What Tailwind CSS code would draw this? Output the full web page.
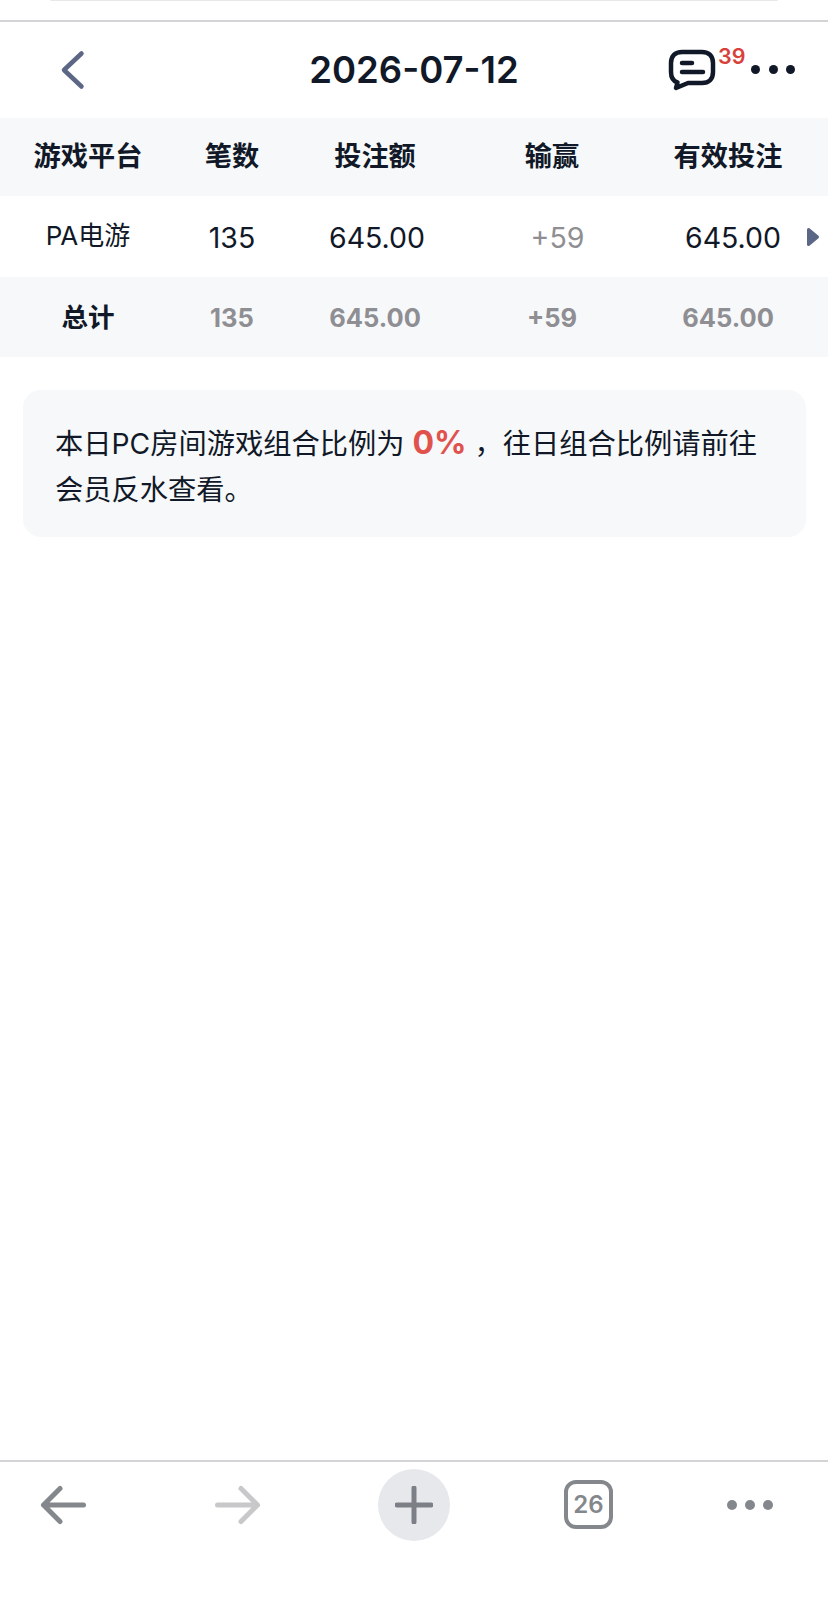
<!DOCTYPE html>
<html lang="zh-CN">
  <head>
    <meta charset="UTF-8" />
    <meta name="viewport" content="width=device-width, initial-scale=1.0" />
    <title>2026-07-12</title>
    <script src="https://cdn.jsdelivr.net/npm/@tailwindcss/browser@4"></script>
  </head>
  <body class="bg-white text-[#111827] font-['Inter','Noto_Sans_CJK_SC',sans-serif]">
    <div class="w-[828px] h-[1615px] flex flex-col overflow-hidden">
      <!-- browser top edge -->
      <div class="h-[22px] shrink-0 border-b-2 border-[#d4d4d6]">
        <div class="mx-[50px] h-px bg-[#e8e8ea] rounded-b-full"></div>
      </div>

      <!-- page header -->
      <header class="relative h-[96px] shrink-0 flex items-center justify-center">
        <svg class="absolute left-[60px] top-[28px]" width="26" height="40" viewBox="0 0 26 40" fill="none">
          <path d="M21.500 3.500 L4 20 L21.500 36.500" stroke="#5c6685" stroke-width="4.500" stroke-linecap="round" stroke-linejoin="round" />
        </svg>
        <h1 class="text-[36.500px] font-semibold leading-none pt-[1px]">2026-07-12</h1>
        <div class="absolute left-[668px] top-[27px] flex items-start">
          <svg width="48" height="42" viewBox="0 0 48 42" fill="none">
            <path d="M14 3 H34 C41 3 45 7 45 14 V23 C45 30 41 34 34 34 H20 L8 39 L9.500 33.500 C5 32 3 29 3 23 V14 C3 7 7 3 14 3 Z" stroke="#111827" stroke-width="4.500" stroke-linejoin="round" />
            <path d="M14 14 H24 M14 23 H35" stroke="#111827" stroke-width="4.500" stroke-linecap="round" />
          </svg>
        </div>
        <span class="absolute left-[718px] top-[21px] text-[21.500px] font-semibold leading-[26px] text-[#d8403a]">39</span>
        <div class="absolute left-[751px] top-[43px] flex gap-[8.500px]">
          <span class="size-[9px] rounded-full bg-[#111827]"></span>
          <span class="size-[9px] rounded-full bg-[#111827]"></span>
          <span class="size-[9px] rounded-full bg-[#111827]"></span>
        </div>
      </header>

      <!-- table -->
      <section class="shrink-0 text-center">
        <div class="grid grid-cols-[176px_112px_174px_180px_172px] items-center h-[78px] bg-[#f7f8fa] text-[27.200px] font-bold">
          <div>游戏平台</div>
          <div>笔数</div>
          <div>投注额</div>
          <div>输赢</div>
          <div>有效投注</div>
        </div>
        <div class="relative grid grid-cols-[176px_112px_178px_183px_168px] items-center h-[81px] pt-[3px] text-[28.500px]">
          <div class="text-[26px] mt-[-6px]">PA电游</div>
          <div>135</div>
          <div>645.00</div>
          <div class="text-[#8e8e93]">+59</div>
          <div>645.00</div>
          <svg class="absolute left-[806px] top-[31px]" width="14" height="20" viewBox="0 0 14 20">
            <path d="M2.500 2.500 L11.500 10 L2.500 17.500 Z" fill="#5c6685" stroke="#5c6685" stroke-width="3" stroke-linejoin="round" />
          </svg>
        </div>
        <div class="grid grid-cols-[176px_112px_174px_180px_172px] items-center h-[80px] pt-[2px] bg-[#f7f8fa] text-[25.500px] font-bold">
          <div class="text-[26.500px]">总计</div>
          <div class="text-[#8e8e93]">135</div>
          <div class="text-[#8e8e93]">645.00</div>
          <div class="text-[#8e8e93]">+59</div>
          <div class="text-[#8e8e93]">645.00</div>
        </div>
      </section>

      <!-- notice card -->
      <section class="ml-[23px] mr-[22px] mt-[33px] h-[147px] shrink-0 rounded-[18px] bg-[#f7f8fa] pl-[32px] pt-[31px] text-[28.250px] leading-[46px]">
        <p>本日PC房间游戏组合比例为 <span class="text-[32px] leading-none font-bold text-[#e0524c]">0%</span> ，往日组合比例请前往<br />会员反水查看。</p>
      </section>

      <div class="flex-1"></div>

      <!-- browser toolbar -->
      <nav class="h-[155px] shrink-0 border-t-2 border-[#d4d4d6] relative">
        <svg class="absolute left-[40px] top-[23px]" width="46" height="40" viewBox="0 0 46 40" fill="none">
          <path d="M43.500 20 H3.500 M20 3.500 L3.500 20 L20 36.500" stroke="#84888c" stroke-width="5" stroke-linecap="round" stroke-linejoin="round" />
        </svg>
        <svg class="absolute left-[215px] top-[23px]" width="46" height="40" viewBox="0 0 46 40" fill="none">
          <path d="M2.500 20 H42.500 M26 3.500 L42.500 20 L26 36.500" stroke="#c8c8ca" stroke-width="5" stroke-linecap="round" stroke-linejoin="round" />
        </svg>
        <div class="absolute left-[378px] top-[7px] size-[72px] rounded-full bg-[#e7e8ec] flex items-center justify-center">
          <svg width="38" height="38" viewBox="0 0 38 38" fill="none">
            <path d="M19 2 V36 M2 19 H36" stroke="#7c8086" stroke-width="5" stroke-linecap="round" />
          </svg>
        </div>
        <div class="absolute left-[564px] top-[18px] size-[49px] rounded-[12px] border-[4.500px] border-[#84888c] flex items-center justify-center text-[24px] font-semibold text-[#84888c]">26</div>
        <div class="absolute left-[727px] top-[38px] flex gap-[8px]">
          <span class="size-[10px] rounded-full bg-[#84888c]"></span>
          <span class="size-[10px] rounded-full bg-[#84888c]"></span>
          <span class="size-[10px] rounded-full bg-[#84888c]"></span>
        </div>
      </nav>
    </div>
  </body>
</html>
